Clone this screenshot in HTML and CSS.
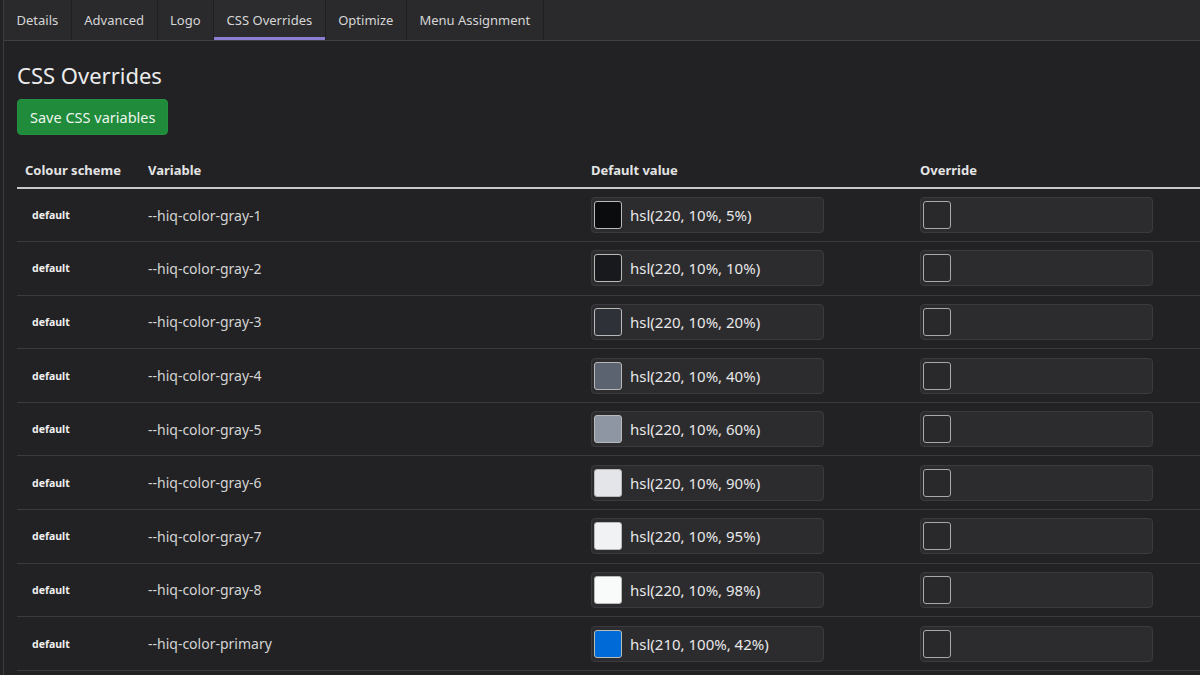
FILE: index.html
```html
<!DOCTYPE html>
<html>
<head>
<meta charset="utf-8">
<link rel="stylesheet" href="styles.css">
</head>
<body>
<div class="page">
  <nav class="tabs">
    <div class="tab">Details</div>
    <div class="tab">Advanced</div>
    <div class="tab">Logo</div>
    <div class="tab active">CSS Overrides</div>
    <div class="tab">Optimize</div>
    <div class="tab">Menu Assignment</div>
  </nav>
  <main class="content">
    <h1 class="title">CSS Overrides</h1>
    <button class="save">Save CSS variables</button>
    <table class="vars">
      <thead>
        <tr><th class="c-scheme">Colour scheme</th><th class="c-var">Variable</th><th class="c-def">Default value</th><th class="c-ovr">Override</th></tr>
      </thead>
      <tbody>
        <tr><td class="scheme">default</td><td class="var">--hiq-color-gray-1</td><td><div class="field"><span class="swatch" style="background:hsl(220,10%,5%)"></span><span class="val">hsl(220, 10%, 5%)</span></div></td><td><div class="field"><span class="swatch empty"></span></div></td></tr>
        <tr><td class="scheme">default</td><td class="var">--hiq-color-gray-2</td><td><div class="field"><span class="swatch" style="background:hsl(220,10%,10%)"></span><span class="val">hsl(220, 10%, 10%)</span></div></td><td><div class="field"><span class="swatch empty"></span></div></td></tr>
        <tr><td class="scheme">default</td><td class="var">--hiq-color-gray-3</td><td><div class="field"><span class="swatch" style="background:hsl(220,10%,20%)"></span><span class="val">hsl(220, 10%, 20%)</span></div></td><td><div class="field"><span class="swatch empty"></span></div></td></tr>
        <tr><td class="scheme">default</td><td class="var">--hiq-color-gray-4</td><td><div class="field"><span class="swatch" style="background:hsl(220,10%,40%)"></span><span class="val">hsl(220, 10%, 40%)</span></div></td><td><div class="field"><span class="swatch empty"></span></div></td></tr>
        <tr><td class="scheme">default</td><td class="var">--hiq-color-gray-5</td><td><div class="field"><span class="swatch" style="background:hsl(220,10%,60%)"></span><span class="val">hsl(220, 10%, 60%)</span></div></td><td><div class="field"><span class="swatch empty"></span></div></td></tr>
        <tr><td class="scheme">default</td><td class="var">--hiq-color-gray-6</td><td><div class="field"><span class="swatch" style="background:hsl(220,10%,90%)"></span><span class="val">hsl(220, 10%, 90%)</span></div></td><td><div class="field"><span class="swatch empty"></span></div></td></tr>
        <tr><td class="scheme">default</td><td class="var">--hiq-color-gray-7</td><td><div class="field"><span class="swatch" style="background:hsl(220,10%,95%)"></span><span class="val">hsl(220, 10%, 95%)</span></div></td><td><div class="field"><span class="swatch empty"></span></div></td></tr>
        <tr><td class="scheme">default</td><td class="var">--hiq-color-gray-8</td><td><div class="field"><span class="swatch" style="background:hsl(220,10%,98%)"></span><span class="val">hsl(220, 10%, 98%)</span></div></td><td><div class="field"><span class="swatch empty"></span></div></td></tr>
        <tr><td class="scheme">default</td><td class="var">--hiq-color-primary</td><td><div class="field"><span class="swatch" style="background:hsl(210,100%,42%)"></span><span class="val">hsl(210, 100%, 42%)</span></div></td><td><div class="field"><span class="swatch empty"></span></div></td></tr>
      </tbody>
    </table>
  </main>
</div>
</body>
</html>
```
FILE: styles.css
```css
* { box-sizing: border-box; }
html, body { margin: 0; padding: 0; }
body {
  background: #222224;
  color: #e6e6e6;
  font-family: "Segoe UI", "Noto Sans", "Open Sans", sans-serif;
  width: 1200px;
  height: 675px;
  overflow: hidden;
}
.page {
  border-left: 1px solid #3c3c40;
  margin-left: 3px;
  min-height: 675px;
}
.tabs {
  display: flex;
  height: 41px;
  background: #2a2a2d;
  border-bottom: 1px solid #404044;
}
.tab {
  padding: 0 12.5px;
  font-size: 13px;
  line-height: 40px;
  color: #d6d6d6;
  border-right: 1px solid #1f1f21;
  position: relative;
}
.tab.active {
  background: #2c2c2f;
}
.tab.active::after {
  content: "";
  position: absolute;
  left: 0; right: 0; bottom: 0;
  height: 3px;
  background: #8b7fd3;
}
.content {
  padding: 18px 0 0 13px;
}
.title {
  margin: 0 0 8px 0;
  font-size: 22px;
  font-weight: 400;
  line-height: 32px;
  color: #ececec;
}
.save {
  display: block;
  height: 36px;
  padding: 0 12px;
  background: #1f8b3b;
  border: 1px solid #23913f;
  border-radius: 4px;
  color: #eef5ee;
  font-family: inherit;
  font-size: 14.5px;
}
.vars {
  margin-top: 18px;
  width: 1200px;
  border-collapse: collapse;
}
.vars th {
  text-align: left;
  font-size: 13px;
  font-weight: 700;
  color: #e4e4e4;
  height: 35px;
  padding: 0 8px;
  border-bottom: 2px solid #c8c8c8;
}
.c-scheme { width: 123px; }
.c-var { width: 443px; }
.c-def { width: 329px; }
.vars td {
  height: 53.6px;
  padding: 0 8px;
  border-bottom: 1px solid #3a3a3d;
  vertical-align: middle;
}
.scheme {
  font-size: 10.5px;
  font-weight: 700;
  padding-left: 15px !important;
  color: #f0f0f0;
}
.var {
  font-size: 14px;
  color: #d4d4d4;
}
.field {
  display: flex;
  align-items: center;
  width: 233px;
  height: 36px;
  background: #2c2c2f;
  border: 1px solid #3b3b3f;
  border-radius: 4px;
  padding: 0 2px;
}
.swatch {
  width: 28px;
  height: 28px;
  border: 1px solid #b9b9b9;
  border-radius: 3px;
  flex: none;
}
.swatch.empty { background: #29292c; border-color: #a8a8a8; }
.val {
  margin-left: 8px;
  font-size: 15px;
  color: #e8e8e8;
}
```
